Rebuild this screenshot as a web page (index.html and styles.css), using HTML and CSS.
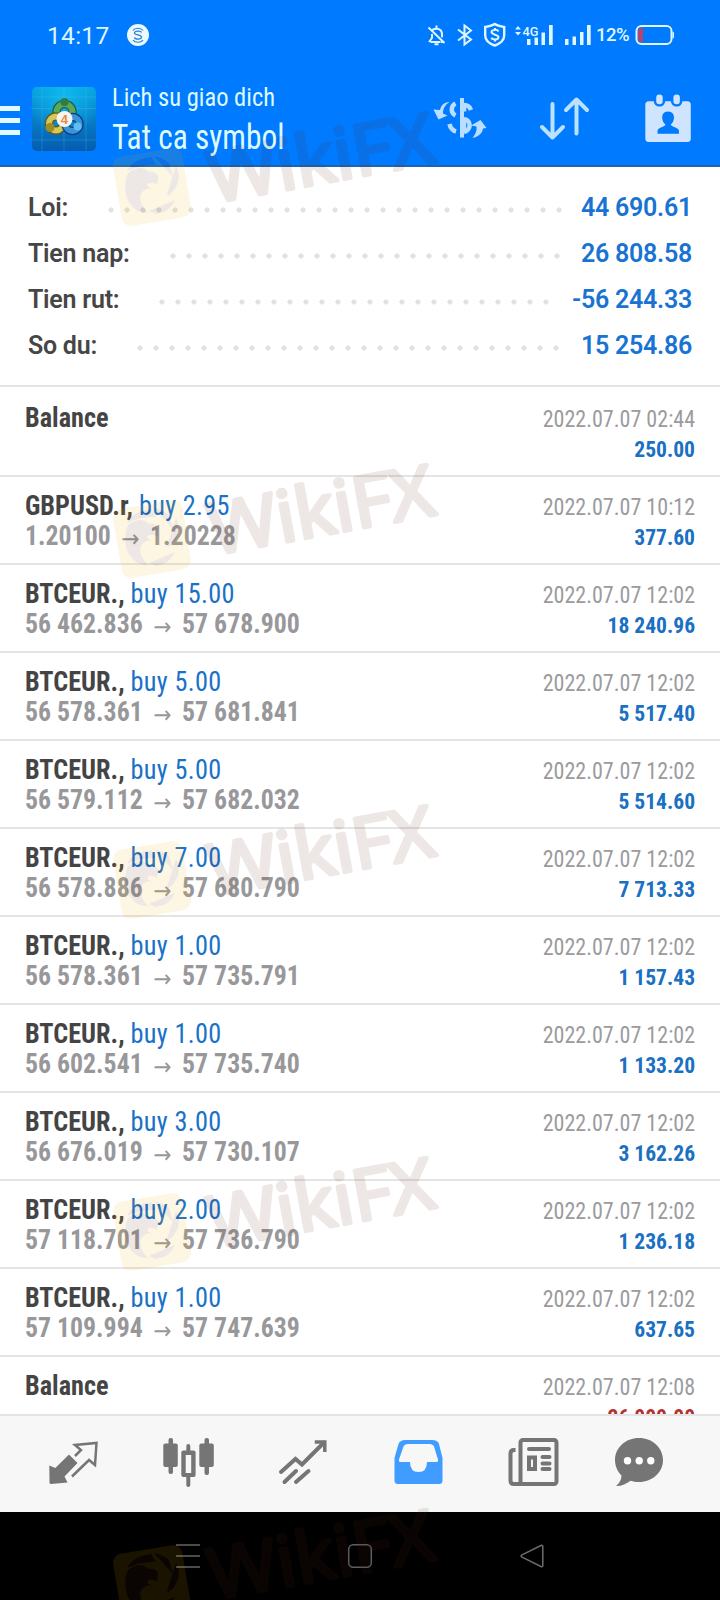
FILE: index.html
```html
<!DOCTYPE html>
<html lang="vi">
<head>
<meta charset="utf-8">
<title>Lich su giao dich</title>
<link rel="stylesheet" href="styles.css">
</head>
<body>
<div class="phone">
  <header class="header">
    <div class="status">
      <span class="clock">14:17</span>
      <svg class="badge-s" width="22" height="22" viewBox="127 24 22 22"><circle cx="138" cy="35" r="11" fill="#eafaff"/><path d="M133 30.500c2-3 8-3 10 0M133 40c2 3 8 3 10 0M141.500 32.500c-.5-1.800-7-1.800-7 .5 0 2.300 7 1.600 7 4.200 0 2.400-6.500 2.400-7 .3" fill="none" stroke="#2a7fd0" stroke-width="1.200"/></svg>
      <div class="status-icons">
        <svg width="26" height="30" viewBox="424 20 26 30" fill="none" stroke="#dff6ff" stroke-width="2"><path d="M430.500 42h10M429 42l3-4v-4M431.500 31.500c.6-1.600 2-2.800 5-2.800 4 0 5.500 2.500 5.500 6v2.500M436.500 25.500v3M428.500 27.500l16 15.500M441 42h3.500M434.500 44.300h4" /></svg>
        <svg width="28" height="30" viewBox="450 20 28 30" fill="none" stroke="#dff6ff" stroke-width="2"><path d="M458 29.500l13 10-6.500 5V25.500l6.500 5-13 10"/></svg>
        <svg width="32" height="30" viewBox="478 20 32 30" fill="none" stroke="#dff6ff"><path d="M494.700 24c3 2 6.500 2.500 9.500 3v8.500c0 4.500-4 8-9.500 10-5.500-2-9.500-5.500-9.500-10V27c3-.5 6.500-1 9.500-3z" stroke-width="2.400"/><path d="M498.500 31.500c-1-2.300-7-2.200-7 .6 0 3 7 2.200 7 5.200 0 2.700-6 2.900-7.300.5M495 28v2.500M495 39v2.500" stroke-width="2"/></svg>
        <svg width="50" height="30" viewBox="510 20 50 30" fill="#dff6ff"><path d="M515 29.500l3-3.500 3 3.500zM515 32l3 3.500 3-3.500z"/><text x="522.500" y="36" class="net" textLength="16" lengthAdjust="spacingAndGlyphs">4G</text><path d="M527 39h3.500v6H527zM534.500 37.500h3.500V45h-3.500zM541.500 32.500h3.500V45h-3.500zM549 25h3.700v20H549z"/></svg>
        <svg width="36" height="30" viewBox="560 20 36 30" fill="#dff6ff"><path d="M565 39h3.500v6H565zM572.500 36.500h3.500V45h-3.500zM580 32h3.500v13H580zM587 25h3.700v20H587z"/></svg>
        <span class="pct">12%</span>
        <svg width="48" height="30" viewBox="632 20 48 30"><rect x="636.500" y="26" width="35" height="18" rx="5" fill="none" stroke="#dff6ff" stroke-width="2"/><path d="M643 28v14h-1.500q-3.500 0-3.500-3.500v-7q0-3.500 3.500-3.500z" fill="#b9426f"/><path d="M672.500 31.500q1.500 0 1.500 1.500v4q0 1.500-1.500 1.500z" fill="#dff6ff"/></svg>
      </div>
    </div>
    <div class="appbar">
      <div class="burger"><i></i><i></i><i></i></div>
      <svg class="logo" width="64" height="64" viewBox="0 0 64 64">
        <defs>
          <linearGradient id="bg" x1="0" y1="0" x2="0" y2="1"><stop offset="0" stop-color="#08a0e0"/><stop offset="1" stop-color="#055cb0"/></linearGradient>
          <radialGradient id="glow" cx=".5" cy=".15" r=".6"><stop offset="0" stop-color="#10c0f0" stop-opacity=".8"/><stop offset="1" stop-color="#10c0f0" stop-opacity="0"/></radialGradient>
        </defs>
        <rect width="64" height="64" rx="5" fill="url(#bg)"/><rect width="64" height="64" rx="5" fill="url(#glow)"/>
        <path d="M10 0v64M32 0v64M54 0v64M0 10h64M0 21.500h64M0 53h64" stroke="#5cc8f0" stroke-opacity=".3" stroke-width=".8"/>
        <g fill="none">
          <circle cx="32.500" cy="25" r="8" stroke="#245c3c" stroke-width="8.500"/><circle cx="32.500" cy="25" r="8" stroke="#5aa85a" stroke-width="6"/>
          <circle cx="24" cy="36.500" r="7" stroke="#5a5a20" stroke-width="8.500"/><circle cx="24" cy="36.500" r="7" stroke="#d6c653" stroke-width="6"/>
          <circle cx="40.500" cy="37" r="7" stroke="#0a4282" stroke-width="8.500"/><circle cx="40.500" cy="37" r="7" stroke="#3a92d8" stroke-width="6"/>
        </g>
        <circle cx="32.500" cy="15" r="4" fill="#2f7d45"/><circle cx="18" cy="40.500" r="4.500" fill="#a08c20"/><circle cx="45.500" cy="39.500" r="4" fill="#5fbdf2"/>
        <circle cx="32.500" cy="32" r="8" fill="#f6f4ee"/><text x="32.300" y="36.800" class="four" text-anchor="middle">4</text>
      </svg>
      <div class="titles">
        <div class="sub">Lich su giao dich</div>
        <div class="main">Tat ca symbol</div>
      </div>
      <div class="actions">
        <svg width="56" height="50" viewBox="432 93 56 50" fill="none" stroke="#b9deff"><path d="M462 98v39.500" stroke-width="4"/><path d="M455.500 103.500c-5 2.500-5 9.500 0 12M464 105c3.500 0 6 2 7 5M449.500 124c.8 3.500 3 6.500 6.500 7.500M464 119c7.500 1 7.500 11.500 0 13M464 104.500v7M464 118v14" stroke-width="4.500"/><path d="M449.500 102c-6 .5-8.500 3.500-9.500 8l-6.500-.5 5 10 9-4-4.500-2c0-5 2-8.500 6.500-11.500zM472.500 138c8-2 10-6 10.500-9.500l3.500-.5-6-8-9.500 5.500 5.500 1c.5 4-.8 7.500-4 11.500z" fill="#b9deff" stroke="none"/></svg>
        <svg width="56" height="50" viewBox="536.500 93 56 50" fill="none" stroke="#b9e2ff" stroke-width="4" stroke-linecap="round" stroke-linejoin="round"><path d="M552 104v33.500M541.500 127l10.500 10.500 10.500-10.500M576 133.500V99.500M565.500 110L576 99.500 586.500 110"/></svg>
        <svg width="52" height="50" viewBox="642 93 52 50"><rect x="645.300" y="101.300" width="45.500" height="40.700" rx="3.500" fill="#cfe4ff"/><rect x="653.700" y="92" width="11.500" height="14.500" rx="5.500" fill="#007aff"/><rect x="670.900" y="92" width="11.500" height="14.500" rx="5.500" fill="#007aff"/><rect x="656.200" y="94.500" width="6.500" height="9.800" rx="3.200" fill="#cfe4ff"/><rect x="673.400" y="94.500" width="6.500" height="9.800" rx="3.200" fill="#cfe4ff"/><path d="M668 111.500c-4 0-6 2.800-5.800 6 .1 3.200 1.300 5.500 3.300 7-.3 2.500-8 2.800-8 6.500v2.800h21.500V131c0-3.700-8-4-8.300-6.500 2-1.500 3.200-3.800 3.300-7 .1-3.200-2-6-6-6z" fill="#007aff"/></svg>
      </div>
    </div>
  </header>

  <section class="summary">
    <div class="sum"><b>Loi:</b><i style="width:464px"></i><em>44 690.61</em></div>
    <div class="sum"><b>Tien nap:</b><i style="width:400px"></i><em>26 808.58</em></div>
    <div class="sum"><b>Tien rut:</b><i style="width:400px"></i><em>-56 244.33</em></div>
    <div class="sum"><b>So du:</b><i style="width:432px"></i><em>15 254.86</em></div>
  </section>

  <main class="list">
    <div class="row first"><div class="l"><p><b>Balance</b></p></div><div class="r"><p>2022.07.07 02:44</p><p class="v">250.00</p></div></div>
    <div class="row"><div class="l"><p><b>GBPUSD.r,</b> <span>buy 2.95</span></p><p class="px">1.20100<u>→</u>1.20228</p></div><div class="r"><p>2022.07.07 10:12</p><p class="v">377.60</p></div></div>
    <div class="row"><div class="l"><p><b>BTCEUR.,</b> <span>buy 15.00</span></p><p class="px">56 462.836<u>→</u>57 678.900</p></div><div class="r"><p>2022.07.07 12:02</p><p class="v">18 240.96</p></div></div>
    <div class="row"><div class="l"><p><b>BTCEUR.,</b> <span>buy 5.00</span></p><p class="px">56 578.361<u>→</u>57 681.841</p></div><div class="r"><p>2022.07.07 12:02</p><p class="v">5 517.40</p></div></div>
    <div class="row"><div class="l"><p><b>BTCEUR.,</b> <span>buy 5.00</span></p><p class="px">56 579.112<u>→</u>57 682.032</p></div><div class="r"><p>2022.07.07 12:02</p><p class="v">5 514.60</p></div></div>
    <div class="row"><div class="l"><p><b>BTCEUR.,</b> <span>buy 7.00</span></p><p class="px">56 578.886<u>→</u>57 680.790</p></div><div class="r"><p>2022.07.07 12:02</p><p class="v">7 713.33</p></div></div>
    <div class="row"><div class="l"><p><b>BTCEUR.,</b> <span>buy 1.00</span></p><p class="px">56 578.361<u>→</u>57 735.791</p></div><div class="r"><p>2022.07.07 12:02</p><p class="v">1 157.43</p></div></div>
    <div class="row"><div class="l"><p><b>BTCEUR.,</b> <span>buy 1.00</span></p><p class="px">56 602.541<u>→</u>57 735.740</p></div><div class="r"><p>2022.07.07 12:02</p><p class="v">1 133.20</p></div></div>
    <div class="row"><div class="l"><p><b>BTCEUR.,</b> <span>buy 3.00</span></p><p class="px">56 676.019<u>→</u>57 730.107</p></div><div class="r"><p>2022.07.07 12:02</p><p class="v">3 162.26</p></div></div>
    <div class="row"><div class="l"><p><b>BTCEUR.,</b> <span>buy 2.00</span></p><p class="px">57 118.701<u>→</u>57 736.790</p></div><div class="r"><p>2022.07.07 12:02</p><p class="v">1 236.18</p></div></div>
    <div class="row"><div class="l"><p><b>BTCEUR.,</b> <span>buy 1.00</span></p><p class="px">57 109.994<u>→</u>57 747.639</p></div><div class="r"><p>2022.07.07 12:02</p><p class="v">637.65</p></div></div>
    <div class="row"><div class="l"><p><b>Balance</b></p></div><div class="r"><p>2022.07.07 12:08</p><p class="v neg">26 000.00</p></div></div>
  </main>

  <nav class="tabs">
    <svg width="56" height="56" viewBox="46 1434 56 56"><path d="M69 1454.500l8.500 8.500-13 13.500 3 6-16.500 1.500q-1.500 0-1.500-1.500l-.2-17 6 2.500z" fill="#757575"/><path d="M75 1456l6-6-6-5 21.500-2-1.500 22-6-5-17 16.500" fill="none" stroke="#757575" stroke-width="2.500"/></svg>
    <svg width="56" height="56" viewBox="161 1434 56 56" fill="#757575"><rect x="163.300" y="1443.500" width="14.500" height="23.500" rx="2"/><rect x="168.500" y="1438" width="4.500" height="36" rx="2"/><rect x="199.300" y="1443.500" width="14.500" height="23.500" rx="2"/><rect x="204.500" y="1438" width="4.500" height="37" rx="2"/><rect x="186.300" y="1444" width="4" height="43" rx="2"/><rect x="181.300" y="1450.500" width="14.300" height="26.500" rx="2"/><rect x="185.700" y="1455" width="5.500" height="18" fill="#f7f7f7"/></svg>
    <svg width="56" height="56" viewBox="276 1434 56 56" fill="none" stroke="#757575" stroke-width="4" stroke-linecap="round"><path d="M281 1472l14.500-13 6.500 5.500 22-22M284.500 1482l11.500-11M296 1482l12.500-11"/><path d="M316.500 1442h8.300v8.300" stroke-linecap="square" stroke-width="3.500"/></svg>
    <svg width="56" height="56" viewBox="391 1434 56 56"><path d="M405 1440h27q5.500 0 7 4l3.500 14v22.500q0 3.500-3.500 3.500h-41q-3.500 0-3.500-3.500V1458l4-14q1.500-4 6.500-4z" fill="#409cff"/><path d="M408 1444h21.500q3.500 0 4.500 2.500l4 13q.5 2.500-1.500 2.500H427q0 10-8.500 10t-8.500-10h-9.500q-2 0-1.500-2.500l4.500-13q1-2.500 4.500-2.500z" fill="#f7f7f7"/></svg>
    <svg width="56" height="56" viewBox="506 1434 56 56" fill="none" stroke="#757575" stroke-width="4"><rect x="520.500" y="1440" width="36" height="44" rx="2.500"/><path d="M515.500 1450h-1.500q-3.500 0-3.500 3.500v27q0 3.500 3.500 3.500h10"/><rect x="529" y="1457.500" width="6" height="11.500"/><path d="M529 1449h20M542.500 1457h7M542.500 1463.500h7M542.500 1469h7" stroke-linecap="round"/></svg>
    <svg class="chat" width="56" height="56" viewBox="611 1434 56 56"><path d="M639 1438c13.500 0 24 9.700 24 22s-10.500 22-24 22c-3 0-6-.4-8.500-1.300-4 3-9 5.500-14.500 5.300 3-2.500 5.500-6 5.500-10.500-4-4-6.500-9.500-6.500-15.500 0-12.300 10.500-22 24-22z" fill="#757575"/><g fill="#fff"><circle cx="627.500" cy="1460.700" r="3.700"/><circle cx="639.200" cy="1460.700" r="3.700"/><circle cx="650.800" cy="1460.700" r="3.700"/></g></svg>
  </nav>
  <div class="sysnav">
    <svg width="24" height="26" viewBox="176 1543 24 26"><path d="M176 1545h24M176 1556h24M176 1567h24" stroke="#646464" stroke-width="1.700"/></svg>
    <svg width="26" height="26" viewBox="347 1543 26 26"><rect x="348.700" y="1544.700" width="22.600" height="22.600" rx="4.500" fill="none" stroke="#5f5f5f" stroke-width="1.500"/></svg>
    <svg width="26" height="26" viewBox="519 1543 26 26"><path d="M541 1545.500q1.800-.8 1.800 1v19q0 1.800-1.800 1l-19-9.300q-1.800-1.200 0-2.300z" fill="none" stroke="#6c6c6c" stroke-width="1.500"/></svg>
  </div>

  <svg class="watermark" width="720" height="1600" viewBox="0 0 720 1600">
    <defs>
      <g id="wm">
        <rect x="117" y="152" width="70" height="70" rx="9" fill="#ebb000" transform="rotate(-9.500 152 187)"/>
        <g fill="#5a2412">
          <path d="M127 171q6-12 24-14l5 8q-15-1-29 6zM154 156q9 2 15 7l4 14zM176 166q8 16-7 29l-2-1zM149 211l26-11q-5 12-19 14z"/>
          <path d="M126 179q1-7 7-9 8-5 16 2 6-1 9 4 0 4-1 9-4-4-10-1 0 4 6 4-12 0-13 9 0 8 8 16-10 0-15-6-10-10-7-28z"/>
        </g>
        <text class="wm-text" transform="translate(213 203) rotate(-10.300)" textLength="228" lengthAdjust="spacingAndGlyphs">WikiFX</text>
      </g>
    </defs>
    <g opacity=".11">
      <use href="#wm"/><use href="#wm" y="352"/><use href="#wm" y="693"/><use href="#wm" y="1045"/><use href="#wm" y="1397"/>
    </g>
  </svg>
</div>
</body>
</html>
```
FILE: styles.css
```css
* { box-sizing: border-box; }
body { margin: 0; background: #fff; font-family: "Roboto Condensed", Roboto, sans-serif; font-stretch: 75%; }
p { margin: 0; }
svg { display: block; flex: none; }
.phone { position: relative; width: 720px; height: 1600px; display: flex; flex-direction: column; overflow: hidden; }

.header { height: 167px; flex: none; background: #007aff; border-bottom: 2px solid #1b66ae; }
.status { height: 70px; display: flex; align-items: center; padding: 0 40px 0 47px; color: #dff6ff; font-family: Roboto, sans-serif; font-stretch: 100%; }
.clock { font-size: 24.5px; letter-spacing: .3px; width: 80px; line-height: 30px; padding-top: 1px; }
.status-icons { display: flex; align-items: center; margin-left: auto; }
.pct { width: 36px; font-size: 18.5px; font-weight: 500; letter-spacing: -.5px; }
.net { font: 500 13px Roboto, sans-serif; }
.appbar { height: 95px; display: flex; align-items: center; }
.burger { width: 20px; margin-right: 12px; display: flex; flex-direction: column; gap: 7px; padding-top: 6px; }
.burger i { height: 5px; background: #e2faff; }
.logo { margin-top: 3px; }
.four { font: bold 13px "Liberation Sans", sans-serif; fill: #e8894c; }
.titles { margin-left: 16px; width: 320px; padding-top: 4px; color: #dffaff; white-space: nowrap; font-weight: 450; }
.sub, .main { width: max-content; transform: scaleX(.925); transform-origin: 0 50%; }
.sub { font-size: 26.500px; line-height: 34px; }
.main { font-size: 34.500px; line-height: 46px; transform: scaleX(.91); }
.actions { display: flex; gap: 49px; }

.summary { height: 220px; flex: none; padding: 17px 28px 0; border-bottom: 2px solid #e4e4e4; font-family: Roboto, sans-serif; font-stretch: 100%; font-size: 25px; letter-spacing: -.25px; }
.sum { height: 46px; display: flex; align-items: center; }
.sum b { font-weight: 650; color: #464646; margin-right: 35px; }
.sum i { height: 6px; margin-top: 6px; background: radial-gradient(circle at center, #e2e2e2 2.300px, transparent 2.900px) 0 0 / 16px 6px repeat-x; }
.sum em { margin-left: auto; font-style: normal; font-weight: 650; color: #1873d2; }

.list { flex: 1; overflow: hidden; }
.row { height: 88px; padding: 14px 25px 0 25px; border-bottom: 2px solid #e4e4e4; display: flex; justify-content: space-between; white-space: nowrap; }
.row.first { height: 90px; padding-top: 16px; }
.l { font-size: 28.500px; line-height: 30px; }
.l p { transform: scaleX(.92); transform-origin: 0 50%; }
.l b { color: #444; font-weight: 700; }
.l span { color: #1971c8; letter-spacing: .35px; }
.l .px { color: #98989b; font-weight: 700; transform: scaleX(.905); }
.px u { display: inline-block; width: 43.500px; padding-top: 2px; vertical-align: -2px; text-align: center; text-decoration: none; font: 24px/20px "DejaVu Sans", sans-serif; }
.r { text-align: right; font-size: 23px; line-height: 30px; padding-top: 2px; color: #9b9b9e; }
.r p { transform: scaleX(.958); transform-origin: 100% 50%; }
.r .v { margin-top: -1px; font-weight: 700; color: #1a70c2; font-size: 22.500px; }
.r .neg { color: #b53232; }

.tabs { height: 98px; flex: none; border-top: 2px solid #e4e4e4; background: #f7f7f7; display: flex; gap: 59px; padding: 18px 0 0 46px; }
.chat { margin-left: -10px; }
.sysnav { height: 88px; flex: none; background: #000; display: flex; justify-content: space-between; padding: 31px 175px 0 176px; }

.watermark { position: absolute; left: 0; top: 0; pointer-events: none; }
.wm-text { font: 500 71px "Open Sans", sans-serif; fill: #5a2412; stroke: #5a2412; stroke-width: 4px; stroke-linejoin: round; }
```
